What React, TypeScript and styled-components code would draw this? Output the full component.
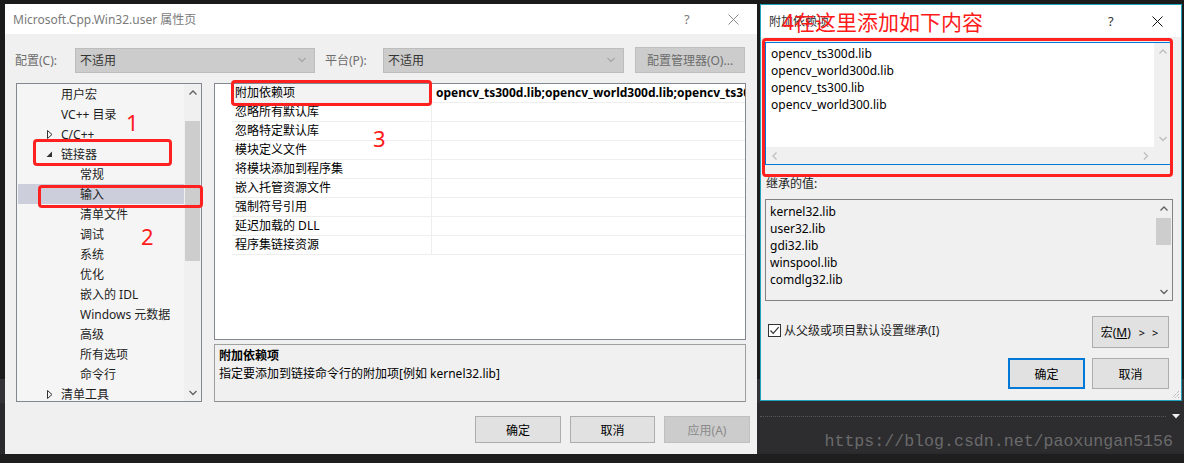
import React from "react";
import styled, { createGlobalStyle } from "styled-components";

const FONT = `"Noto Sans", "Noto Sans CJK SC", sans-serif`;

const GlobalStyle = createGlobalStyle`
  * { box-sizing: border-box; }
  html, body { margin: 0; padding: 0; background: #1e1e1e; }
  body { font-family: ${FONT}; font-size: 12px; color: #000; }
`;

const Desktop = styled.div`
  position: relative;
  width: 1184px;
  height: 463px;
  overflow: hidden;
  display: flex;
  align-items: flex-start;
  padding: 4px 0 0 5px;
  background: linear-gradient(
    to bottom,
    #1b1b1c 0,
    #1b1b1c 379px,
    #333337 379px,
    #333337 403px,
    #2a2a2c 403px,
    #2a2a2c 454px,
    #1e1e1e 454px
  );
`;

/* ---------- shared window parts ---------- */

const TitleBar = styled.header<{ $active?: boolean }>`
  flex: none;
  height: ${(p) => (p.$active ? 32 : 30)}px;
  background: #fff;
  display: flex;
  align-items: center;
  padding: 0 18px 0 8px;
  color: ${(p) => (p.$active ? "#333" : "#7a7a7a")};
`;

const TitleText = styled.span`
  flex: 1;
  font-size: 12px;
  white-space: nowrap;
`;

const HelpGlyph = styled.span`
  font-size: 13px;
  width: 7px;
  margin-right: 37px;
  line-height: 1;
`;

const CloseIcon = ({ color }: { color: string }) => (
  <svg width="11" height="11" viewBox="0 0 11 11">
    <path d="M0.5 0.5 L10.5 10.5 M10.5 0.5 L0.5 10.5" stroke={color} strokeWidth="1" />
  </svg>
);

const Chevron = ({ dir, color = "#606060" }: { dir: "up" | "down" | "left" | "right"; color?: string }) => {
  const vertical = dir === "up" || dir === "down";
  const pts = {
    up: "0.5,4.5 4,1 7.5,4.5",
    down: "0.5,1 4,4.5 7.5,1",
    left: "4.5,0.5 1,4 4.5,7.5",
    right: "1,0.5 4.5,4 1,7.5",
  }[dir];
  return (
    <svg width={vertical ? 8 : 6} height={vertical ? 6 : 8} viewBox={vertical ? "0 0 8 6" : "0 0 6 8"}>
      <polyline points={pts} fill="none" stroke={color} strokeWidth="1.3" />
    </svg>
  );
};

const PushButton = styled.button<{ $w: number; $h: number; $primary?: boolean; $disabled?: boolean }>`
  flex: none;
  width: ${(p) => p.$w}px;
  height: ${(p) => p.$h}px;
  margin: 0;
  padding: 0;
  font: inherit;
  font-size: 12px;
  color: ${(p) => (p.$disabled ? "#8a8a8a" : "#000")};
  background: ${(p) => (p.$disabled ? "#cccccc" : "#e1e1e1")};
  border: ${(p) => (p.$primary ? "2px solid #0078d7" : p.$disabled ? "1px solid #bfbfbf" : "1px solid #adadad")};
  display: flex;
  align-items: center;
  justify-content: center;
  white-space: nowrap;
`;

const VScroll = styled.div`
  width: 17px;
  flex: none;
  display: flex;
  flex-direction: column;
  background: #f0f0f0;
`;

const ScrollArrow = styled.div`
  flex: none;
  width: 17px;
  height: 17px;
  display: flex;
  align-items: center;
  justify-content: center;
`;

const ScrollTrack = styled.div`
  flex: 1;
  display: flex;
  flex-direction: column;
`;

const ScrollThumb = styled.div<{ $offset: number; $size: number }>`
  margin: ${(p) => p.$offset}px 1px 0;
  height: ${(p) => p.$size}px;
  background: #cdcdcd;
`;

/* ---------- annotations ---------- */

const Callout = styled.div<{ $x: number; $y: number; $w: number; $h: number }>`
  position: absolute;
  left: ${(p) => p.$x}px;
  top: ${(p) => p.$y}px;
  width: ${(p) => p.$w}px;
  height: ${(p) => p.$h}px;
  border: 3px solid #ff2020;
  border-radius: 4px;
  pointer-events: none;
`;

const Mark = styled.span<{ $x: number; $y: number; $size?: number }>`
  position: absolute;
  z-index: 2;
  left: ${(p) => p.$x}px;
  top: ${(p) => p.$y}px;
  font-family: "Noto Sans", "Noto Sans CJK SC", sans-serif;
  font-weight: 400;
  font-size: ${(p) => p.$size ?? 22}px;
  line-height: 1;
  color: #ff1a1a;
  white-space: nowrap;
  pointer-events: none;
`;

/* ---------- main property window ---------- */

const MainWindow = styled.section`
  position: relative;
  flex: none;
  width: 752px;
  height: 450px;
  background: #f0f0f0;
  display: flex;
  flex-direction: column;
`;

const ConfigRow = styled.div`
  flex: none;
  display: flex;
  align-items: center;
  height: 26px;
  margin-top: 13px;
  padding-left: 10px;
`;

const FieldLabel = styled.span<{ $w: number; $gap?: number }>`
  flex: none;
  width: ${(p) => p.$w}px;
  margin-left: ${(p) => p.$gap ?? 0}px;
  color: #6d6d6d;
  white-space: nowrap;
`;

const Combo = styled.div<{ $w: number }>`
  flex: none;
  width: ${(p) => p.$w}px;
  height: 25px;
  background: #cccccc;
  border: 1px solid #bdbdbd;
  display: flex;
  align-items: center;
  justify-content: space-between;
  padding: 0 8px 0 4px;
  color: #333;
`;

const ConfigButton = styled.div`
  flex: none;
  width: 110px;
  height: 26px;
  margin-left: 11px;
  background: #cccccc;
  border: 1px solid #bfbfbf;
  color: #6d6d6d;
  display: flex;
  align-items: center;
  justify-content: center;
  white-space: nowrap;
`;

const Content = styled.div`
  flex: none;
  display: flex;
  gap: 12px;
  margin-top: 10px;
  padding-left: 11px;
`;

const TreePanel = styled.div`
  flex: none;
  width: 186px;
  height: 319px;
  border: 1px solid #828790;
  background: #f5f5f5;
  display: flex;
  overflow: hidden;
`;

const TreeList = styled.div`
  flex: 1;
  padding-left: 1px;
  overflow: hidden;
`;

const TreeRow = styled.div<{ $level: number; $selected?: boolean }>`
  height: 20px;
  display: flex;
  align-items: center;
  padding-left: ${(p) => (p.$level === 0 ? 29 : 62)}px;
  background: ${(p) => (p.$selected ? "#cccedb" : "transparent")};
  white-space: nowrap;
  color: #1e1e1e;
`;

const ToggleSlot = styled.span`
  flex: none;
  width: 14px;
  height: 20px;
  display: flex;
  align-items: center;
`;

const TreeToggle = ({ state }: { state?: "open" | "closed" }) => (
  <ToggleSlot>
    {state === "closed" && (
      <svg width="6" height="9" viewBox="0 0 6 9">
        <polygon points="0.5,0.5 5,4.5 0.5,8.5" fill="none" stroke="#333" strokeWidth="1" />
      </svg>
    )}
    {state === "open" && (
      <svg width="7" height="7" viewBox="0 0 7 7" style={{ marginLeft: -1 }}>
        <polygon points="6,0.5 6,6 0.5,6" fill="#333" />
      </svg>
    )}
  </ToggleSlot>
);

const SideStack = styled.div`
  flex: none;
  width: 532px;
  display: flex;
  flex-direction: column;
  gap: 4px;
`;

const PropGrid = styled.div`
  height: 257px;
  border: 1px solid #828790;
  background: #fff;
  overflow: hidden;
`;

const PropRow = styled.div`
  display: grid;
  grid-template-columns: 17px 200px 1fr;
  height: 19px;
`;

const NameCell = styled.div<{ $selected?: boolean }>`
  border-right: 1px solid #eeeeee;
  border-bottom: 1px solid #eeeeee;
  padding-left: 3px;
  line-height: 18px;
  background: ${(p) => (p.$selected ? "#f3f3f3" : "#fff")};
  white-space: nowrap;
  overflow: hidden;
`;

const ValueCell = styled.div<{ $bold?: boolean }>`
  border-bottom: 1px solid #eeeeee;
  padding-left: 4px;
  line-height: 18px;
  font-weight: ${(p) => (p.$bold ? 700 : 400)};
  white-space: nowrap;
  overflow: hidden;
`;

const DescBox = styled.div`
  height: 58px;
  border: 1px solid #a0a0a0;
  border-bottom-color: #8c8c8c;
  background: #f0f0f0;
  padding: 2px 4px;
  line-height: 18px;
`;

const DescTitle = styled.div`
  font-weight: 700;
`;

const ButtonRow = styled.div`
  flex: none;
  display: flex;
  justify-content: flex-end;
  gap: 9px;
  margin-top: 14px;
  padding-right: 7px;
`;

/* ---------- right column / dependency dialog ---------- */

const SideColumn = styled.div`
  flex: none;
  width: 424px;
  margin-left: 3px;
  display: flex;
  flex-direction: column;
`;

const DepWindow = styled.section`
  position: relative;
  width: 422px;
  height: 397px;
  border: 1px solid #1fa3bd;
  background: #f0f0f0;
  display: flex;
  flex-direction: column;
`;

const DepBody = styled.div`
  flex: 1;
  display: flex;
  flex-direction: column;
  padding: 5px 0 0 4px;
`;

const Editor = styled.div`
  width: 407px;
  height: 123px;
  border: 1px solid #0078d7;
  background: #fff;
  display: grid;
  grid-template-columns: 1fr 17px;
  grid-template-rows: 1fr 17px;
`;

const LineList = styled.div<{ $pad?: string }>`
  flex: 1;
  padding: ${(p) => p.$pad ?? "2px 5px"};
  line-height: 17px;
  white-space: nowrap;
  overflow: hidden;
`;

const HScroll = styled.div`
  background: #f0f0f0;
  display: flex;
  align-items: center;
  justify-content: space-between;
  padding: 0 5px 0 6px;
`;

const Corner = styled.div`
  background: #f0f0f0;
`;

const SectionLabel = styled.div`
  margin-top: 11px;
  padding-left: 1px;
  line-height: 16px;
  color: #1e1e1e;
`;

const InheritList = styled.div`
  margin-top: 7px;
  width: 408px;
  height: 102px;
  border: 1px solid #828282;
  background: #f0f0f0;
  display: flex;
`;

const OptionRow = styled.div`
  margin-top: 15px;
  width: 404px;
  display: flex;
  justify-content: space-between;
  align-items: flex-start;
`;

const CheckLabel = styled.label`
  display: flex;
  align-items: center;
  gap: 3px;
  margin-top: 5px;
  padding-left: 3px;
  white-space: nowrap;
  color: #1e1e1e;
`;

const CheckBox = styled.span`
  width: 13px;
  height: 13px;
  border: 1px solid #333;
  background: #fff;
  display: flex;
  align-items: center;
  justify-content: center;
`;

const Underline = styled.span`
  text-decoration: underline;
`;

const Arrows = styled.span`
  margin-left: 8px;
  letter-spacing: 2px;
  font-size: 11px;
`;

const ActionRow = styled.div`
  margin-top: 10px;
  width: 404px;
  display: flex;
  justify-content: flex-end;
  gap: 7px;
`;

const Grip = styled.svg`
  position: absolute;
  right: 1px;
  bottom: 1px;
`;

const OutputStrip = styled.div`
  height: 51px;
  background: #2d2d30;
  display: flex;
  flex-direction: column;
`;

const RuleRow = styled.div`
  margin-top: 12px;
  height: 7px;
  display: flex;
  align-items: center;
`;

const DottedRule = styled.div`
  flex: 1;
  border-top: 1px dotted #57575b;
`;

const Watermark = styled.div`
  margin-top: auto;
  padding-right: 11px;
  text-align: right;
  font-family: "Liberation Mono", "DejaVu Sans Mono", monospace;
  font-size: 16.6px;
  line-height: 20px;
  color: #6a6a6a;
  white-space: nowrap;
`;

/* ---------- data ---------- */

type TreeItem = { label: string; level: 0 | 1; toggle?: "open" | "closed"; selected?: boolean };

const treeItems: TreeItem[] = [
  { label: "用户宏", level: 0 },
  { label: "VC++ 目录", level: 0 },
  { label: "C/C++", level: 0, toggle: "closed" },
  { label: "链接器", level: 0, toggle: "open" },
  { label: "常规", level: 1 },
  { label: "输入", level: 1, selected: true },
  { label: "清单文件", level: 1 },
  { label: "调试", level: 1 },
  { label: "系统", level: 1 },
  { label: "优化", level: 1 },
  { label: "嵌入的 IDL", level: 1 },
  { label: "Windows 元数据", level: 1 },
  { label: "高级", level: 1 },
  { label: "所有选项", level: 1 },
  { label: "命令行", level: 1 },
  { label: "清单工具", level: 0, toggle: "closed" },
];

const props = [
  { name: "附加依赖项", value: "opencv_ts300d.lib;opencv_world300d.lib;opencv_ts300.lib;opencv_world300.lib;%(AdditionalDependencies)" },
  { name: "忽略所有默认库", value: "" },
  { name: "忽略特定默认库", value: "" },
  { name: "模块定义文件", value: "" },
  { name: "将模块添加到程序集", value: "" },
  { name: "嵌入托管资源文件", value: "" },
  { name: "强制符号引用", value: "" },
  { name: "延迟加载的 DLL", value: "" },
  { name: "程序集链接资源", value: "" },
];

const deps = ["opencv_ts300d.lib", "opencv_world300d.lib", "opencv_ts300.lib", "opencv_world300.lib"];
const inherited = ["kernel32.lib", "user32.lib", "gdi32.lib", "winspool.lib", "comdlg32.lib"];

export default function App() {
  return (
    <>
      <GlobalStyle />
      <Desktop>
        <MainWindow>
          <TitleBar>
            <TitleText>Microsoft.Cpp.Win32.user 属性页</TitleText>
            <HelpGlyph>?</HelpGlyph>
            <CloseIcon color="#8a8a8a" />
          </TitleBar>

          <ConfigRow>
            <FieldLabel $w={60}>配置(C):</FieldLabel>
            <Combo $w={240}>
              <span>不适用</span>
              <Chevron dir="down" color="#a8a8a8" />
            </Combo>
            <FieldLabel $w={58} $gap={10}>平台(P):</FieldLabel>
            <Combo $w={241}>
              <span>不适用</span>
              <Chevron dir="down" color="#a8a8a8" />
            </Combo>
            <ConfigButton>配置管理器(O)...</ConfigButton>
          </ConfigRow>

          <Content>
            <TreePanel>
              <TreeList>
                {treeItems.map((it) => (
                  <TreeRow key={it.label} $level={it.level} $selected={it.selected}>
                    {it.level === 0 && <TreeToggle state={it.toggle} />}
                    {it.label}
                  </TreeRow>
                ))}
              </TreeList>
              <VScroll>
                <ScrollArrow>
                  <Chevron dir="up" />
                </ScrollArrow>
                <ScrollTrack>
                  <ScrollThumb $offset={20} $size={140} />
                </ScrollTrack>
                <ScrollArrow>
                  <Chevron dir="down" />
                </ScrollArrow>
              </VScroll>
            </TreePanel>

            <SideStack>
              <PropGrid>
                {props.map((p, i) => (
                  <PropRow key={p.name}>
                    <div />
                    <NameCell $selected={i === 0}>{p.name}</NameCell>
                    <ValueCell $bold={i === 0}>{p.value}</ValueCell>
                  </PropRow>
                ))}
              </PropGrid>
              <DescBox>
                <DescTitle>附加依赖项</DescTitle>
                <div>指定要添加到链接命令行的附加项[例如 kernel32.lib]</div>
              </DescBox>
            </SideStack>
          </Content>

          <ButtonRow>
            <PushButton $w={86} $h={27}>确定</PushButton>
            <PushButton $w={85} $h={27}>取消</PushButton>
            <PushButton $w={86} $h={27} $disabled>应用(A)</PushButton>
          </ButtonRow>

          <Callout $x={28} $y={135} $w={139} $h={27} />
          <Callout $x={33} $y={181} $w={165} $h={23} />
          <Callout $x={226} $y={76} $w={201} $h={26} />
          <Mark $x={121} $y={107}>1</Mark>
          <Mark $x={136} $y={221}>2</Mark>
          <Mark $x={368} $y={123}>3</Mark>
        </MainWindow>

        <SideColumn>
          <DepWindow>
            <TitleBar $active>
              <TitleText>附加依赖项</TitleText>
              <HelpGlyph>?</HelpGlyph>
              <CloseIcon color="#111" />
            </TitleBar>
            <DepBody>
              <Editor>
                <LineList>
                  {deps.map((d) => (
                    <div key={d}>{d}</div>
                  ))}
                </LineList>
                <VScroll>
                  <ScrollArrow>
                    <Chevron dir="up" color="#bdbdbd" />
                  </ScrollArrow>
                  <ScrollTrack />
                  <ScrollArrow>
                    <Chevron dir="down" color="#bdbdbd" />
                  </ScrollArrow>
                </VScroll>
                <HScroll>
                  <Chevron dir="left" color="#bdbdbd" />
                  <Chevron dir="right" color="#bdbdbd" />
                </HScroll>
                <Corner />
              </Editor>

              <SectionLabel>继承的值:</SectionLabel>
              <InheritList>
                <LineList $pad="3px 4px">
                  {inherited.map((d) => (
                    <div key={d}>{d}</div>
                  ))}
                </LineList>
                <VScroll>
                  <ScrollArrow>
                    <Chevron dir="up" />
                  </ScrollArrow>
                  <ScrollTrack>
                    <ScrollThumb $offset={1} $size={27} />
                  </ScrollTrack>
                  <ScrollArrow>
                    <Chevron dir="down" />
                  </ScrollArrow>
                </VScroll>
              </InheritList>

              <OptionRow>
                <CheckLabel>
                  <CheckBox>
                    <svg width="11" height="11" viewBox="0 0 11 11">
                      <polyline points="1.5,5.5 4.2,8.3 9.7,2.2" fill="none" stroke="#333" strokeWidth="1.2" />
                    </svg>
                  </CheckBox>
                  从父级或项目默认设置继承(I)
                </CheckLabel>
                <PushButton $w={77} $h={32}>
                  宏(<Underline>M</Underline>)<Arrows>&gt; &gt;</Arrows>
                </PushButton>
              </OptionRow>

              <ActionRow>
                <PushButton $w={77} $h={31} $primary>确定</PushButton>
                <PushButton $w={77} $h={31}>取消</PushButton>
              </ActionRow>
            </DepBody>

            <Grip width="10" height="10" viewBox="0 0 10 10">
              <path d="M9 2 L2 9 M9 5 L5 9 M9 8 L8 9" stroke="#a0a0a0" strokeWidth="1" strokeDasharray="1 1" />
            </Grip>
            <Callout $x={1} $y={33} $w={411} $h={139} />
            <Mark $x={21} $y={7} $size={21}>4在这里添加如下内容</Mark>
          </DepWindow>

          <OutputStrip>
            <RuleRow>
              <DottedRule />
              <svg width="8" height="5" viewBox="0 0 8 5" style={{ margin: "0 4px 0 6px" }}>
                <polygon points="0,0 8,0 4,4.5" fill="#f0f0f0" />
              </svg>
            </RuleRow>
            <Watermark>https://blog.csdn.net/paoxungan5156</Watermark>
          </OutputStrip>
        </SideColumn>
      </Desktop>
    </>
  );
}
